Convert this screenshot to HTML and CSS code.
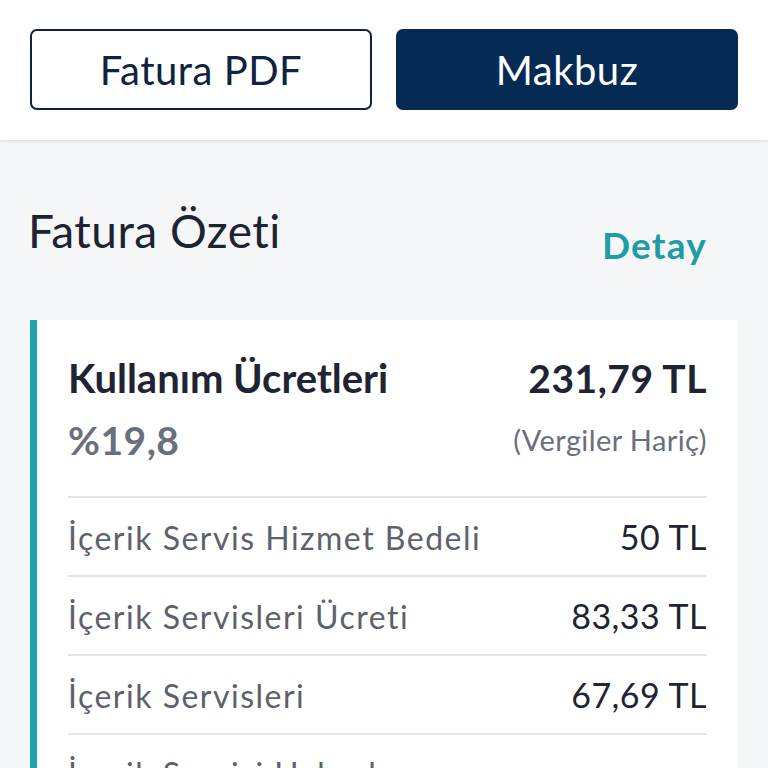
FILE: index.html
```html
<!DOCTYPE html>
<html lang="tr">
<head>
  <meta charset="UTF-8" />
  <meta name="viewport" content="width=device-width, initial-scale=1.0"/>
  <title>Fatura Özeti</title>
  <link rel="stylesheet" href="styles.css">
</head>
<body>
  <header class="actions">
    <button class="btn btn-outline">Fatura PDF</button>
    <button class="btn btn-dark">Makbuz</button>
  </header>

  <div class="summary-head">
    <h2>Fatura Özeti</h2>
    <a class="detail-link" href="#">Detay</a>
  </div>

  <div class="card">
    <div class="card-top">
      <div class="line">
        <span class="title">Kullanım Ücretleri</span>
        <span class="total">231,79 TL</span>
      </div>
      <div class="line line-sub">
        <span class="rate">%19,8</span>
        <span class="note">(Vergiler Hariç)</span>
      </div>
    </div>

    <div class="row">
      <span class="label">İçerik Servis Hizmet Bedeli</span>
      <span class="value">50 TL</span>
    </div>
    <div class="row">
      <span class="label">İçerik Servisleri Ücreti</span>
      <span class="value">83,33 TL</span>
    </div>
    <div class="row">
      <span class="label">İçerik Servisleri</span>
      <span class="value">67,69 TL</span>
    </div>
    <div class="row row-wrap">
      <span class="label">İçerik Servisi Haberleşme Ücreti</span>
      <span class="value">30,77 TL</span>
    </div>
  </div>
</body>
</html>
```

FILE: styles.css
```css
body {
  font-family: Lato, 'Noto Sans', sans-serif;
  background-color: #f5f6f8;
  color: #1f2435;
  margin: 0;
  padding: 0;
}

/* top buttons */
.actions {
  background-color: #fff;
  display: grid;
  grid-template-columns: 1fr 1fr;
  gap: 24px;
  padding: 29px 30px 30px;
  box-shadow: 0 1px 3px rgba(0,0,0,0.12);
}

.btn {
  height: 81px;
  border-radius: 7px;
  font-family: inherit;
  font-size: 40px;
  letter-spacing: 0.5px;
  cursor: pointer;
}

.btn-outline {
  background-color: #fff;
  color: #0e2340;
  border: 2px solid #0e2340;
}

.btn-dark {
  background-color: #052a53;
  color: #fff;
  border: 2px solid #052a53;
}

/* section title */
.summary-head {
  display: flex;
  justify-content: space-between;
  align-items: flex-start;
  height: 55px;
  padding: 63px 61px 62px 28px;
}

.summary-head h2 {
  margin: 0;
  font-size: 46px;
  font-weight: 400;
  letter-spacing: 0.5px;
  line-height: 1.2;
  color: #1e2332;
}

.detail-link {
  margin-top: 20px;
  font-size: 37px;
  font-weight: 700;
  letter-spacing: 1.2px;
  line-height: 1.2;
  color: #1e9ea4;
  text-decoration: none;
}

/* card */
.card {
  background: #fff;
  margin: 0 30px;
  padding: 0 31px;
  border-left: 7px solid #22a3a9;
}

.card-top {
  padding: 34px 0 32px;
}

.line {
  display: flex;
  justify-content: space-between;
  align-items: baseline;
}

.line-sub {
  align-items: center;
  margin-top: 15px;
}

.title {
  font-size: 40px;
  font-weight: 700;
  line-height: 1.2;
}

.total {
  font-size: 39px;
  font-weight: 700;
  letter-spacing: 0.5px;
  line-height: 1.2;
}

.rate {
  font-size: 39px;
  font-weight: 700;
  letter-spacing: 0.5px;
  line-height: 1.2;
  color: #6a6f7c;
}

.note {
  font-size: 29px;
  letter-spacing: 0.4px;
  line-height: 1.2;
  color: #6a6f7c;
}

.row {
  display: flex;
  justify-content: space-between;
  align-items: baseline;
  border-top: 2px solid #e3e5e8;
  padding: 19px 0 17px;
}

.row-wrap {
  align-items: center;
}

.row-wrap .label {
  max-width: 440px;
}

.label {
  font-size: 32px;
  letter-spacing: 1.5px;
  line-height: 40px;
  color: #5c616c;
}

.value {
  font-size: 34px;
  letter-spacing: 0.5px;
  line-height: 40px;
  color: #1f2435;
}
```
